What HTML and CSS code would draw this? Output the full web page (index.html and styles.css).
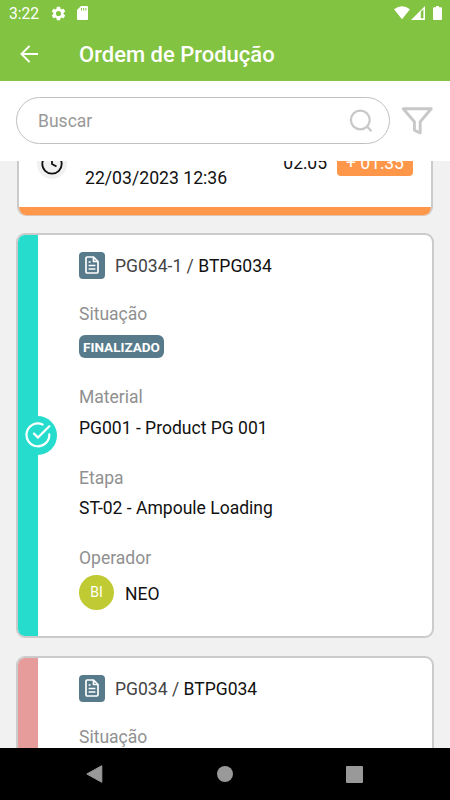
FILE: index.html
```html
<!DOCTYPE html>
<html lang="pt-BR">
<head>
<meta charset="utf-8">
<title>Ordem de Produção</title>
<link rel="stylesheet" href="styles.css">
</head>
<body>
<div class="screen">
  <header class="header">
    <div class="status">
      <span class="clock">3:22</span>
      <svg class="gear" width="15" height="15" viewBox="1.500 1.500 21 21"><path fill="#fff" d="M19.14 12.94c.04-.3.06-.61.06-.94s-.02-.64-.07-.94l2.03-1.58a.49.49 0 0 0 .12-.61l-1.92-3.32a.49.49 0 0 0-.59-.22l-2.39.96a7 7 0 0 0-1.62-.94l-.36-2.54a.48.48 0 0 0-.48-.41h-3.84a.48.48 0 0 0-.47.41l-.36 2.54c-.59.24-1.13.57-1.62.94l-2.39-.96a.48.48 0 0 0-.59.22L2.74 8.87a.48.48 0 0 0 .12.61l2.03 1.58a6 6 0 0 0 0 1.88l-2.03 1.58a.49.49 0 0 0-.12.61l1.92 3.32c.12.22.37.29.59.22l2.39-.96c.5.38 1.03.7 1.62.94l.36 2.54c.05.24.24.41.48.41h3.84c.24 0 .44-.17.47-.41l.36-2.54a7 7 0 0 0 1.62-.94l2.39.96c.22.08.47 0 .59-.22l1.92-3.32a.48.48 0 0 0-.12-.61zM12 15.6A3.6 3.6 0 1 1 12 8.4a3.6 3.6 0 0 1 0 7.2z"/></svg>
      <svg class="sd" width="11" height="14" viewBox="0 0 11 14"><path fill="#fff" d="M4 0h6a1 1 0 0 1 1 1v12a1 1 0 0 1-1 1H1a1 1 0 0 1-1-1V4z"/><path stroke="#82c341" stroke-width="1" d="M4.5 2v2.5M6.7 2v2.5M8.9 2v2.5"/></svg>
      <span class="grow"></span>
      <svg width="16" height="14" viewBox="0 0 16 14"><path fill="#fff" d="M0 3.2Q8-2.6 16 3.2L8 13.3z"/></svg>
      <svg class="signal" width="14" height="14" viewBox="0 0 14 14"><path fill="#fff" d="M14 0v14H0z"/><path fill="#82c341" d="M9.8 5.8 12.4 3.2v9H9.8z"/></svg>
      <svg class="battery" width="9" height="14" viewBox="0 0 9 14"><path fill="#fff" d="M3 0h3v1.3h2a1 1 0 0 1 1 1V13a1 1 0 0 1-1 1H1a1 1 0 0 1-1-1V2.300a1 1 0 0 1 1-1h2z"/></svg>
    </div>
    <div class="appbar">
      <svg class="back" width="18" height="18" viewBox="0 0 18 18" fill="none" stroke="#fff" stroke-width="2"><path d="M18 9H1.800M9.600.9 1.500 9l8.100 8.100"/></svg>
      <h1>Ordem de Produção</h1>
    </div>
  </header>

  <div class="search">
    <div class="field">
      <span>Buscar</span>
      <svg width="24" height="24" viewBox="0 0 24 24" fill="none" stroke="#c8c8c8" stroke-width="2.200"><circle cx="11.300" cy="11" r="9.400"/><path d="m17.500 17 5 5.200"/></svg>
    </div>
    <svg class="filter" width="32" height="28" viewBox="0 0 32 28" fill="none" stroke="#c8c8c8" stroke-width="2.900" stroke-linejoin="round"><path d="M2.200 1.800h28L19.200 14.700v11.300l-5.800-2.800v-8.500z"/></svg>
  </div>

  <main class="list">
    <section class="card late">
      <div class="time-row">
        <span class="watch"><svg width="22" height="22" viewBox="0 0 22 22" fill="none" stroke="#111" stroke-width="1.800"><circle cx="11" cy="11" r="9.700"/><path d="M11 4.500V11l4.500 2.500"/></svg></span>
        <span class="date">22/03/2023 12:36</span>
        <span class="elapsed">02:05</span>
        <span class="extra">+ 01:35</span>
      </div>
    </section>

    <section class="card order">
      <div class="bar done"></div>
      <span class="check"><svg width="26" height="26" viewBox="0 0 26 26" fill="none" stroke="#fff" stroke-width="2.200" stroke-linecap="round" stroke-linejoin="round"><path d="M17.600 2.500A11.400 11.400 0 1 0 24.300 12.300M9 11.600l4 4L24.300 4.200"/></svg></span>
      <div class="content">
        <div class="title"><span class="doc"><svg width="14" height="18" viewBox="0 0 14 18" fill="none" stroke="#fff" stroke-width="1.700" stroke-linejoin="round"><path d="M1 2.200Q1 1 2.200 1H8.500L13 5.500v10.300Q13 17 11.800 17H2.200Q1 17 1 15.800zM8.500 1v4.500H13M3.600 6h2M3.600 9.500h6.800M3.600 13h6.800"/></svg></span><span class="code">PG034-1 / <b>BTPG034</b></span></div>
        <div class="label">Situação</div>
        <span class="tag">FINALIZADO</span>
        <div class="label material">Material</div>
        <div class="value">PG001 - Product PG 001</div>
        <div class="label">Etapa</div>
        <div class="value">ST-02 - Ampoule Loading</div>
        <div class="label">Operador</div>
        <div class="person"><span class="avatar">BI</span><span class="name">NEO</span></div>
      </div>
    </section>

    <section class="card order">
      <div class="bar stopped"></div>
      <div class="content">
        <div class="title"><span class="doc"><svg width="14" height="18" viewBox="0 0 14 18" fill="none" stroke="#fff" stroke-width="1.700" stroke-linejoin="round"><path d="M1 2.200Q1 1 2.200 1H8.500L13 5.500v10.300Q13 17 11.800 17H2.200Q1 17 1 15.800zM8.500 1v4.500H13M3.600 6h2M3.600 9.500h6.800M3.600 13h6.800"/></svg></span><span class="code">PG034 / <b>BTPG034</b></span></div>
        <div class="label">Situação</div>
      </div>
    </section>
  </main>

  <nav class="nav">
    <svg width="17" height="18" viewBox="0 0 17 18"><path fill="#999" stroke="#999" stroke-linejoin="round" d="M.8 9 15.800.700v16.600z"/></svg>
    <span class="home"></span>
    <span class="recent"></span>
  </nav>
</div>
</body>
</html>
```
FILE: styles.css
```css
* { box-sizing: border-box; }
body { margin: 0; font-family: Roboto, "Liberation Sans", sans-serif; }
svg { display: block; flex: none; }
.screen {
  width: 450px;
  height: 800px;
  display: flex;
  flex-direction: column;
  overflow: hidden;
  background: #f1f1f1;
  color: #111;
  font-size: 17.55px;
}
.header { flex: none; height: 81px; background: #82c341; color: #fff; }
.status { height: 26px; padding: 0 8px 0 9px; display: flex; align-items: center; }
.clock { width: 42px; padding-top: 2px; font-size: 15.6px; line-height: 28px; font-weight: 400; }
.sd { margin-left: 11px; }
.grow { flex: 1; }
.signal { margin-left: 1px; }
.battery { margin-left: 8px; }
.appbar { height: 55px; padding-left: 20px; display: flex; align-items: center; }
.appbar h1 { margin: 0 0 0 41px; padding-top: 2px; font-size: 22px; line-height: 56px; font-weight: 500; }

.search {
  flex: none;
  height: 80px;
  padding: 0 16px 1px;
  display: flex;
  align-items: center;
  background: #fff;
}
.field {
  width: 374px;
  height: 47px;
  padding: 0 16px 0 21px;
  display: flex;
  align-items: center;
  justify-content: space-between;
  border: 1px solid #c0c0c0;
  border-radius: 24px;
  color: #999;
}
.filter { margin-left: 11px; }

.list { flex: 1; min-height: 0; overflow: hidden; padding: 0 16px; }
.card { border: 2px solid #cbcbcb; border-radius: 9px; background: #fff; }
.late {
  height: 75px;
  margin: -20px 1px 17px;
  border-bottom: 1px solid #e0c4b0;
  overflow: hidden;
  display: flex;
  flex-direction: column;
}
.late::after { content: ""; flex: none; height: 8px; margin-top: auto; background: #ff974a; }
.time-row { padding: 5px 17px 0 18px; display: flex; align-items: flex-start; }
.watch {
  width: 30px;
  height: 30px;
  margin-top: 1px;
  display: flex;
  align-items: center;
  justify-content: center;
  border-radius: 50%;
  background: #f1f1f1;
}
.date { margin: 19px 0 0 18px; line-height: 22px; font-size: 17.65px; }
.elapsed { margin: 4px 10px 0 auto; line-height: 22px; }
.extra {
  width: 76px;
  height: 28px;
  margin-right: 1px;
  border-radius: 4px;
  background: #ff974a;
  color: #fff;
  text-align: center;
  line-height: 30px;
}

.order { position: relative; height: 405px; margin-bottom: 18px; display: flex; overflow: hidden; }
.bar { width: 20px; }
.done { background: #26dccd; }
.stopped { background: #e79c9c; }
.check {
  position: absolute;
  left: 0;
  top: 180.5px;
  width: 39px;
  height: 39px;
  display: flex;
  align-items: center;
  justify-content: center;
  border-radius: 50%;
  background: #26dccd;
}
.content { padding: 16.5px 0 0 41px; }
.title { height: 27px; display: flex; align-items: center; margin-bottom: 25.5px; }
.doc {
  width: 26px;
  height: 27px;
  display: flex;
  align-items: center;
  justify-content: center;
  border-radius: 4px;
  background: #587b8c;
}
.code { margin-left: 10px; line-height: 27px; padding-top: 2px; color: #444; }
.code b { color: #111; font-weight: 400; }
.label { height: 20px; line-height: 20px; color: #909090; }
.tag {
  display: block;
  width: 85px;
  height: 23px;
  margin-top: 11px;
  border-radius: 6px;
  background: #587b8c;
  color: #fff;
  font-size: 13.5px;
  font-weight: 700;
  line-height: 24px;
  text-align: center;
}
.material { margin-top: 29px; }
.value { height: 20px; margin: 10px 0 31px; line-height: 22px; }
.value ~ .value { margin: 9px 0 31px; }
.person { margin-top: 7px; display: flex; align-items: center; }
.name { padding-top: 2px; }
.avatar {
  width: 35px;
  height: 35px;
  margin-right: 11px;
  border-radius: 50%;
  background: #c0ca33;
  color: #fff;
  font-size: 14px;
  line-height: 35px;
  text-align: center;
}

.nav {
  flex: none;
  height: 52px;
  padding: 0 87px 0 86px;
  display: flex;
  align-items: center;
  justify-content: space-between;
  background: #000;
}
.home { width: 16px; height: 16px; border-radius: 50%; background: #999; }
.recent { width: 17px; height: 17px; border-radius: 1px; background: #999; }
```
